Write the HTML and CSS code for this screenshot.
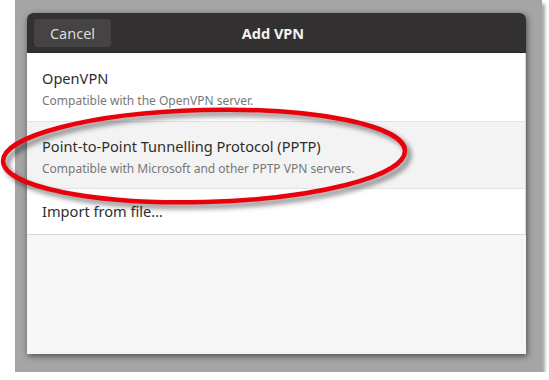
FILE: index.html
```html
<!DOCTYPE html>
<html lang="en">
<head>
    <meta charset="UTF-8">
    <title>Add VPN</title>
    <link rel="stylesheet" href="styles.css">
</head>
<body>
    <div class="screen">
        <div class="dialog">
            <header class="titlebar">
                <button class="btn-cancel">Cancel</button>
                <h1>Add VPN</h1>
            </header>
            <ul class="vpn-list">
                <li class="first">
                    <div class="vpn-name">OpenVPN</div>
                    <div class="vpn-desc">Compatible with the OpenVPN server.</div>
                </li>
                <li class="active">
                    <div class="vpn-name">Point-to-Point Tunnelling Protocol (PPTP)</div>
                    <div class="vpn-desc">Compatible with Microsoft and other PPTP VPN servers.</div>
                </li>
                <li class="import">
                    <div class="vpn-name">Import from file…</div>
                </li>
            </ul>
        </div>
    </div>
    <!-- annotation -->
    <svg class="mark" width="549" height="380" viewBox="0 0 549 380">
        <defs>
            <filter id="shade" x="-10%" y="-30%" width="120%" height="160%">
                <feGaussianBlur stdDeviation="2.5"/>
            </filter>
        </defs>
        <ellipse cx="208" cy="160" rx="201" ry="46" transform="rotate(-1.5 208 160)" fill="none" stroke="rgba(0,0,0,0.45)" stroke-width="5" filter="url(#shade)"/>
        <ellipse cx="204" cy="156" rx="201" ry="46" transform="rotate(-1.5 204 156)" fill="none" stroke="#e8000b" stroke-width="4.5"/>
    </svg>
</body>
</html>
```

FILE: styles.css
```css
body {
    margin: 0;
    background: #fff;
    font-family: "Noto Sans", "Open Sans", sans-serif;
}
.screen {
    margin-left: 15px;
    width: 527px;
    height: 372px;
    padding: 13px 0 0 12px;
    box-sizing: border-box;
    background: #a5a5a5;
    box-shadow: 3px 4px 3px rgba(0, 0, 0, 0.35);
}
.dialog {
    width: 499px;
    height: 341px;
    background: #f6f6f6;
    border-radius: 6px 6px 0 0;
    box-shadow: 1px 2px 6px rgba(0, 0, 0, 0.55);
    overflow: hidden;
}
.titlebar {
    height: 39px;
    background: #323030;
    border-bottom: 1px solid #2a2828;
    display: flex;
    align-items: center;
    padding: 0 7px;
}
.btn-cancel {
    width: 77px;
    height: 28px;
    background: #454343;
    color: #dcdcdc;
    border: none;
    border-radius: 4px;
    font-family: inherit;
    font-size: 14.5px;
    padding: 0;
}
.titlebar h1 {
    flex: 1;
    margin: 0 84px 0 0;
    text-align: center;
    color: #f2f2f2;
    font-size: 14.5px;
    font-weight: bold;
}
.vpn-list {
    list-style: none;
    margin: 0;
    padding: 0;
    background: #fff;
    border-right: 1px solid #d8d8d8;
}
.vpn-list li {
    height: 67px;
    box-sizing: border-box;
    padding: 14px 15px 0;
    border-bottom: 1px solid #e3e3e3;
}
.vpn-list li.first {
    height: 69px;
    padding-top: 15px;
}
.vpn-list li.active {
    background: #f3f3f3;
}
.vpn-list li.import {
    height: 46px;
    padding-top: 12px;
    border-bottom-color: #d8d8d8;
}
.vpn-name {
    font-size: 14.6px;
    color: #2e2e2e;
    line-height: 20px;
}
.vpn-desc {
    margin-top: 5px;
    font-size: 12px;
    color: #777;
    line-height: 16px;
}
.mark {
    position: absolute;
    top: 0;
    left: 0;
}
```
